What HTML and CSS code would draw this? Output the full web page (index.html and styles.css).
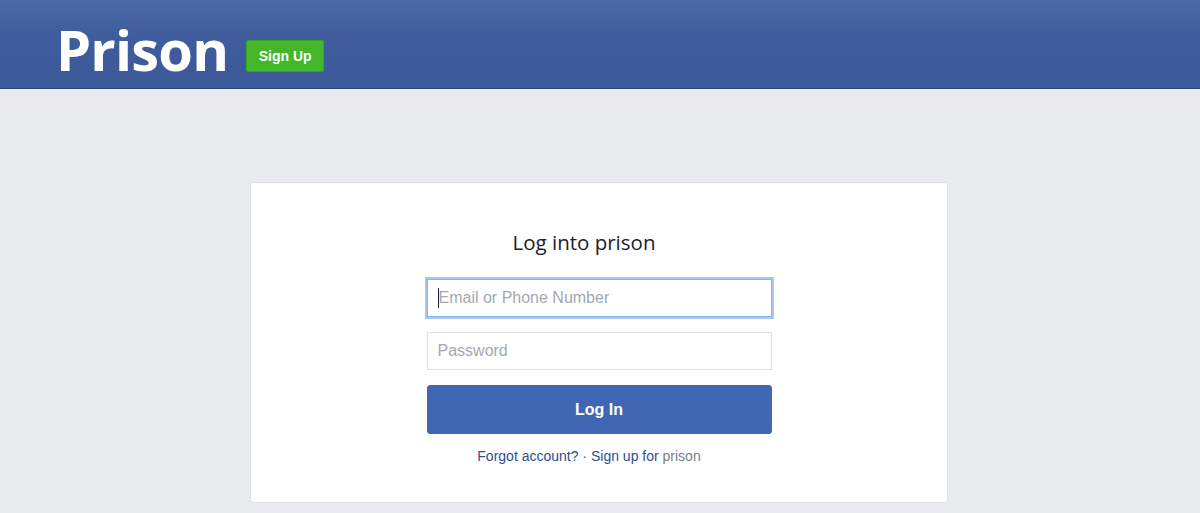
FILE: index.html
```html
<!DOCTYPE html>
<html>
<head>
<meta charset="utf-8">
<link rel="stylesheet" href="styles.css">
</head>
<body>
<header class="topbar">
  <div class="brand">Prison</div>
  <a class="signup-btn" href="#">Sign Up</a>
</header>
<main class="main">
  <section class="card">
    <h1 class="title">Log into prison</h1>
    <form class="form">
      <div class="field focused"><span class="caret"></span><span class="ph">Email or Phone Number</span></div>
      <div class="field"><span class="ph">Password</span></div>
      <button class="login-btn" type="button">Log In</button>
    </form>
    <div class="links"><a href="#">Forgot account?</a> · <a href="#">Sign up for</a> <span class="muted">prison</span></div>
  </section>
</main>
</body>
</html>
```
FILE: styles.css
```css
* { box-sizing: border-box; }
html, body { margin: 0; padding: 0; }
body {
  background: #e9ebee;
  font-family: "Liberation Sans", Arial, sans-serif;
  height: 513px;
  overflow: hidden;
}
.topbar {
  height: 89px;
  background: linear-gradient(#4c69a7, #3f5d9c 40%, #3b5998);
  border-bottom: 1px solid #29487d;
  display: flex;
  align-items: flex-start;
  padding-left: 56px;
}
.brand {
  font-family: "Open Sans", sans-serif;
  font-weight: 700;
  font-size: 56px;
  color: #fff;
  letter-spacing: -0.8px;
  line-height: 1;
  margin-top: 21px;
}
.signup-btn {
  display: inline-flex;
  align-items: center;
  justify-content: center;
  width: 78px;
  height: 32px;
  margin-top: 40px;
  margin-left: 18px;
  background: #42b72a;
  border: 1px solid #3aa524;
  border-radius: 2px;
  color: #fff;
  font-weight: 700;
  font-size: 14px;
  text-decoration: none;
}
.main {
  display: flex;
  justify-content: center;
  padding-top: 93px;
}
.card {
  width: 698px;
  height: 321px;
  background: #fff;
  border: 1px solid #dddfe2;
  border-radius: 3px;
  margin-left: -2px;
  display: flex;
  flex-direction: column;
  align-items: center;
  padding-top: 45px;
}
.title {
  margin: 0;
  font-family: "Open Sans", sans-serif;
  font-weight: 400;
  font-size: 20.5px;
  color: #1d2129;
  line-height: 28px;
  margin-left: -30px;
}
.form {
  margin-top: 22px;
  width: 345px;
  margin-left: 0;
  display: flex;
  flex-direction: column;
}
.field {
  height: 38px;
  border: 1px solid #dddfe2;
  display: flex;
  align-items: center;
  padding-left: 10px;
  font-size: 16px;
  margin-bottom: 15px;
}
.field.focused {
  margin-top: 1px;
  border-color: #8bb3e8;
  box-shadow: 0 0 0 2px #a9c7f0;
  margin-bottom: 15px;
}
.caret {
  width: 1px;
  height: 20px;
  background: #1d2129;
}
.ph { color: #a4a8b0; }
.login-btn {
  height: 49px;
  background: #4267b2;
  border: 1px solid #4267b2;
  border-radius: 3px;
  color: #fff;
  font-family: "Liberation Sans", Arial, sans-serif;
  font-weight: 700;
  font-size: 16px;
}
.links {
  margin-top: 14px;
  margin-left: -20px;
  font-size: 14px;
  color: #365899;
}
.links a { color: #2f4f8c; text-decoration: none; }
.muted { color: #7a7e85; }
```
